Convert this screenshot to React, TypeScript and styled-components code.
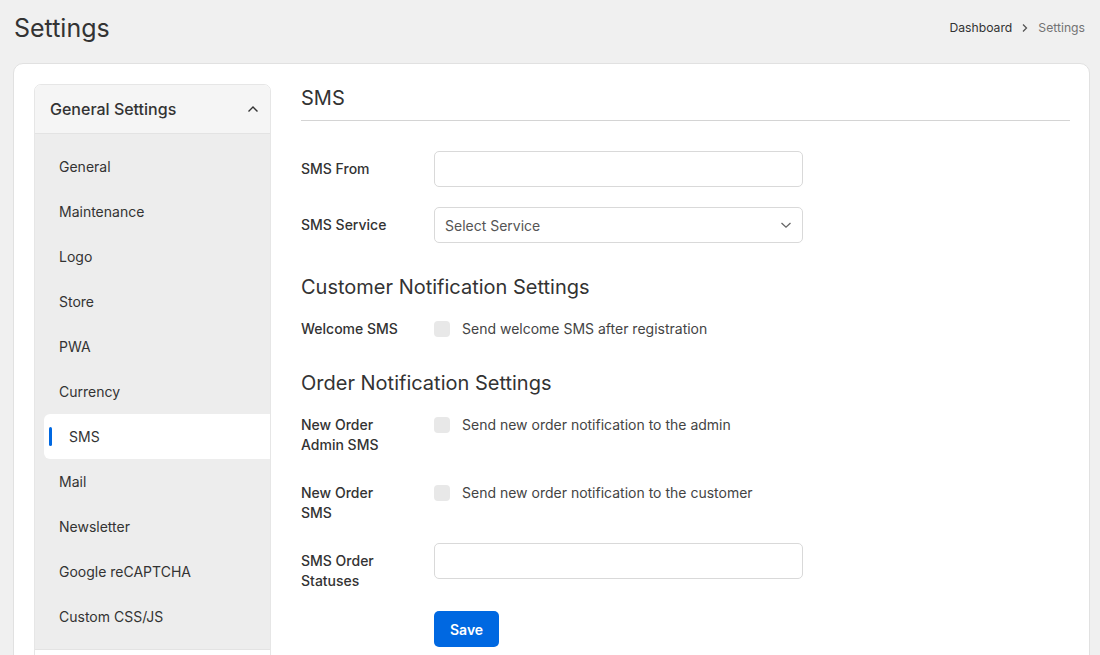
import { useState } from "react";
import styled, { createGlobalStyle } from "styled-components";

const GlobalStyle = createGlobalStyle`
  * { box-sizing: border-box; }
  body {
    margin: 0;
    background-color: #f0f0f0;
    font-family: Inter, "Noto Sans", sans-serif;
    color: #333333;
  }
`

const Page = styled.div`
  padding: 0 10px 0 13px;
`

const TopBar = styled.div`
  display: flex;
  align-items: center;
  justify-content: space-between;
  height: 55px;
  padding-right: 5px;
`

const Title = styled.h1`
  margin: 0;
  font-size: 25px;
  font-weight: 400;
  color: #333333;
  padding-left: 1px;
`

const Crumbs = styled.div`
  display: flex;
  align-items: center;
  gap: 9px;
  font-size: 12.2px;
  color: #333333;

  & > span:last-child {
    color: #737373;
  }
`

const Card = styled.div`
  margin-top: 8px;
  background-color: #ffffff;
  border: 1px solid #e1e1e1;
  border-radius: 10px;
  padding: 20px 19px 0 20px;
  display: flex;
  gap: 30px;
  min-height: 620px;
`

const Sidebar = styled.aside`
  width: 237px;
  flex-shrink: 0;
  border: 1px solid #e6e6e6;
  border-radius: 7px 7px 0 0;
  overflow: hidden;
  align-self: flex-start;
`

const SideHeader = styled.div`
  height: 49px;
  display: flex;
  align-items: center;
  justify-content: space-between;
  padding: 0 11px 0 15px;
  background-color: #f5f5f5;
  border-bottom: 1px solid #e3e3e3;
  font-size: 16px;
  font-weight: 450;
  color: #333333;
`

const SideList = styled.ul`
  list-style: none;
  margin: 0;
  padding: 10px 0 10px 0;
  background-color: #ededed;
  border-bottom: 1px solid #e3e3e3;
`

const SideItem = styled.li<{ $active?: boolean }>`
  position: relative;
  height: 45px;
  display: flex;
  align-items: center;
  font-size: 14px;
  color: #333333;
  margin-left: ${p => (p.$active ? "9px" : "0")};
  padding-left: ${p => (p.$active ? "25px" : "24px")};
  background-color: ${p => (p.$active ? "#ffffff" : "transparent")};
  border-radius: ${p => (p.$active ? "6px 0 0 6px" : "0")};

  &::before {
    content: "";
    display: ${p => (p.$active ? "block" : "none")};
    position: absolute;
    left: 5px;
    top: 13px;
    width: 3px;
    height: 19px;
    border-radius: 2px;
    background-color: #0068e1;
  }
`

const SideRest = styled.div`
  height: 40px;
  background-color: #ffffff;
`

const Content = styled.main`
  flex: 1;
  padding-top: 2px;
`

const SectionTitle = styled.h2`
  margin: 0;
  font-size: 20px;
  font-weight: 400;
  line-height: 24px;
  padding-bottom: 10px;
  border-bottom: 1px solid #d4d4d4;
  color: #333333;
`

const Form = styled.form`
  margin-top: 30px;
  display: flex;
  flex-direction: column;
`

const SubTitle = styled.h3`
  margin: 12px 0 12px 0;
  font-size: 20px;
  font-weight: 400;
  line-height: 24px;
  color: #333333;
`

const Row = styled.div`
  display: grid;
  grid-template-columns: 133px 369px;
  margin-bottom: 20px;
  align-items: start;
`

const Label = styled.label`
  padding-top: 8px;
  font-size: 14px;
  font-weight: 450;
  line-height: 20px;
  color: #333333;
  max-width: 100px;
`

const TextInput = styled.input`
  width: 100%;
  height: 36px;
  border: 1px solid #d9d9d9;
  border-radius: 5px;
  padding: 0 10px;
  font-family: inherit;
  font-size: 14px;
  color: #333333;
  outline: none;
`

const SelectWrap = styled.div`
  position: relative;

  & > svg {
    position: absolute;
    right: 11px;
    top: 13px;
    pointer-events: none;
  }
`

const Select = styled.select`
  width: 100%;
  height: 36px;
  border: 1px solid #d9d9d9;
  border-radius: 5px;
  padding: 0 10px;
  font-family: inherit;
  font-size: 14px;
  color: #555555;
  background-color: #ffffff;
  appearance: none;
  outline: none;
`

const CheckLine = styled.div`
  display: flex;
  align-items: center;
  gap: 12px;
  padding-top: 8px;
  line-height: 20px;
  font-size: 14px;
  color: #444444;
  white-space: nowrap;
`

const Check = styled.input`
  appearance: none;
  margin: 0;
  width: 16px;
  height: 16px;
  border-radius: 4px;
  background-color: #e8e8e8;
  border: none;
`

const Actions = styled.div`
  padding-left: 133px;
`

const SaveButton = styled.button`
  height: 36px;
  padding: 0 16px;
  border: none;
  border-radius: 5px;
  background-color: #0068e1;
  color: #ffffff;
  font-family: inherit;
  font-size: 14px;
  font-weight: 600;
`

const menu = [
  "General",
  "Maintenance",
  "Logo",
  "Store",
  "PWA",
  "Currency",
  "SMS",
  "Mail",
  "Newsletter",
  "Google reCAPTCHA",
  "Custom CSS/JS",
]

function App() {
  const [smsFrom, setSmsFrom] = useState("")
  const [statuses, setStatuses] = useState("")

  return (
    <Page>
      <GlobalStyle />
      <TopBar>
        <Title>Settings</Title>
        <Crumbs>
          <span>Dashboard</span>
          <svg width="8" height="10" viewBox="0 0 8 10" fill="none">
            <path d="M2 1.5 5.5 5 2 8.5" stroke="#555" strokeWidth="1.3" />
          </svg>
          <span>Settings</span>
        </Crumbs>
      </TopBar>
      <Card>
        <Sidebar>
          <SideHeader>
            General Settings
            <svg width="12" height="8" viewBox="0 0 12 8" fill="none">
              <path d="M1.5 6.5 6 2l4.5 4.5" stroke="#333" strokeWidth="1.4" />
            </svg>
          </SideHeader>
          <SideList>
            {menu.map(item => (
              <SideItem key={item} $active={item === "SMS"}>{item}</SideItem>
            ))}
          </SideList>
          <SideRest />
        </Sidebar>
        <Content>
          <SectionTitle>SMS</SectionTitle>
          <Form>
            <Row>
              <Label>SMS From</Label>
              <TextInput value={smsFrom} onChange={e => setSmsFrom(e.target.value)} />
            </Row>
            <Row>
              <Label>SMS Service</Label>
              <SelectWrap>
                <Select defaultValue="">
                  <option value="">Select Service</option>
                </Select>
                <svg width="12" height="10" viewBox="0 0 12 10" fill="none">
                  <path d="M1.5 3 6 7.2 10.5 3" stroke="#666" strokeWidth="1.3" />
                </svg>
              </SelectWrap>
            </Row>

            <SubTitle>Customer Notification Settings</SubTitle>
            <Row>
              <Label>Welcome SMS</Label>
              <CheckLine>
                <Check type="checkbox" />
                Send welcome SMS after registration
              </CheckLine>
            </Row>

            <SubTitle>Order Notification Settings</SubTitle>
            <Row>
              <Label>New Order Admin SMS</Label>
              <CheckLine>
                <Check type="checkbox" />
                Send new order notification to the admin
              </CheckLine>
            </Row>
            <Row>
              <Label>New Order SMS</Label>
              <CheckLine>
                <Check type="checkbox" />
                Send new order notification to the customer
              </CheckLine>
            </Row>
            <Row>
              <Label>SMS Order Statuses</Label>
              <TextInput value={statuses} onChange={e => setStatuses(e.target.value)} />
            </Row>
            <Actions>
              <SaveButton type="button">Save</SaveButton>
            </Actions>
          </Form>
        </Content>
      </Card>
    </Page>
  )
}

export default App;
